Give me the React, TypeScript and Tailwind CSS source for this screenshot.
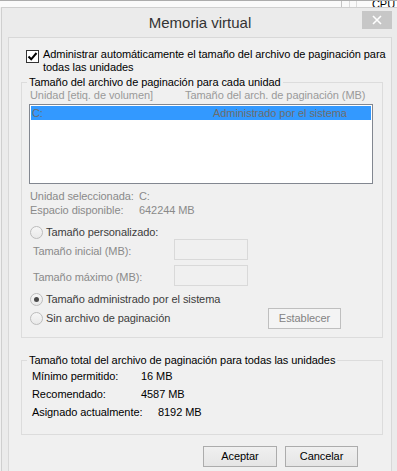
import React from 'react';

const font = { fontFamily: '"Liberation Sans", Arial, sans-serif' };

function Radio({ checked = false }: { checked?: boolean }) {
  return (
    <span className="flex h-[13px] w-[13px] shrink-0 items-center justify-center rounded-full border border-[#bcbcbc] bg-gradient-to-b from-[#f6f6f6] to-[#e9e9e9]">
      {checked && <span className="h-[5px] w-[5px] rounded-full bg-[#4a4a4a]" />}
    </span>
  );
}

function Checkbox() {
  return (
    <span className="flex h-[13px] w-[13px] shrink-0 items-center justify-center border border-[#333] bg-white">
      <svg width="11" height="11" viewBox="0 0 11 11">
        <path d="M1.5 5.5 L4.2 8.3 L9.5 2" fill="none" stroke="#000" strokeWidth="2" />
      </svg>
    </span>
  );
}

function WinButton({ label, disabled = false, width }: { label: string; disabled?: boolean; width: string }) {
  return (
    <div
      className={
        disabled
          ? `flex h-[21px] ${width} items-center justify-center border border-[#bfbfbf] bg-[#f4f4f4] text-[#838383]`
          : `flex h-[21px] ${width} items-center justify-center border border-[#acacac] bg-gradient-to-b from-[#f0f0f0] to-[#e5e5e5] text-black`
      }
    >
      {label}
    </div>
  );
}

export default function App() {
  return (
    <div className="h-[471px] w-[397px] overflow-hidden whitespace-nowrap bg-[#f0f0f0] text-[11px] leading-[13px] tracking-[-0.07px]" style={font}>
      {/* background window peeking out at the top */}
      <div className="flex h-[7px] overflow-hidden border-t border-[#acacac] bg-[#fafafa]">
        <div className="w-[341px] shrink-0 overflow-hidden">
          <div className="-mt-[12px] pl-[88px] text-black">Prevención de ejecución de datos</div>
        </div>
        <div className="w-[8px] shrink-0 border-l border-[#c4c4c4]" />
        <div className="w-[7px] shrink-0 border-l border-[#dcdcdc]" />
        <div className="w-[14px] shrink-0 border-l border-[#dcdcdc]" />
        <div className="-mt-[3px] flex-1 bg-white pl-[2px] text-black">CPU</div>
      </div>

      {/* dialog */}
      <div className="ml-[1px] w-[398px] border border-[#cfcfcf] bg-[#ebebeb] px-[6px]">
        <div className="flex h-[29px] items-center">
          <div className="flex-1 pl-[30px] text-center text-[15px] leading-[18px] tracking-normal text-[#333]">Memoria virtual</div>
          <div className="mb-[5px] flex h-[18px] w-[30px] items-center justify-center bg-[#c7c7c7]">
            <svg width="10" height="10" viewBox="0 0 10 10">
              <path d="M1 1 L9 9 M9 1 L1 9" stroke="#fff" strokeWidth="1.6" />
            </svg>
          </div>
        </div>

        <div className="h-[440px] border border-[#d8d8d8] bg-[#f0f0f0]">
          {/* auto manage checkbox */}
          <div className="mt-[10px] flex gap-[4px] pl-[17px] text-black">
            <span className="pt-[2px]">
              <Checkbox />
            </span>
            <span>
              Administrar automáticamente el tamaño del archivo de paginación para
              <br />
              todas las unidades
            </span>
          </div>

          {/* per-drive group */}
          <fieldset className="ml-[12px] mt-[2px] w-[362px] border border-[#dcdcdc] pb-[8px]">
            <legend className="ml-[5px] px-[2px] text-black">Tamaño del archivo de paginación para cada unidad</legend>
            <div className="flex pl-[8px] text-[#9a9a9a]">
              <span className="w-[155px]">Unidad [etiq. de volumen]</span>
              <span>Tamaño del arch. de paginación (MB)</span>
            </div>
            <div className="ml-[7px] mt-[2px] h-[80px] w-[344px] border border-[#828790] bg-white p-[1px]">
              <div className="flex h-[14px] items-center bg-[#3399ff] pl-[1px] text-[#6d6d6d]">
                <span className="w-[181px]">C:</span>
                <span>Administrado por el sistema</span>
              </div>
            </div>

            <div className="mt-[5px] pl-[8px] text-[#8a8a8a]">
              <div className="flex h-[14px] items-center">
                <span className="w-[109px]">Unidad seleccionada:</span>
                <span>C:</span>
              </div>
              <div className="flex h-[14px] items-center">
                <span className="w-[109px]">Espacio disponible:</span>
                <span>642244 MB</span>
              </div>
            </div>

            <div className="mt-[9px] flex items-center gap-[3px] pl-[8px] text-[#3c3c3c]">
              <Radio />
              <span>Tamaño personalizado:</span>
            </div>

            <div className="flex items-center pl-[11px] text-[#8a8a8a]">
              <span className="w-[141px] pt-[3px]">Tamaño inicial (MB):</span>
              <span className="h-[21px] w-[74px] border border-[#d9d9d9] bg-[#f0f0f0]" />
            </div>
            <div className="mt-[5px] flex items-center pl-[11px] text-[#8a8a8a]">
              <span className="w-[141px] pt-[3px]">Tamaño máximo (MB):</span>
              <span className="h-[21px] w-[74px] border border-[#d9d9d9] bg-[#f0f0f0]" />
            </div>

            <div className="mt-[7px] flex items-center gap-[3px] pl-[8px] text-[#3c3c3c]">
              <Radio checked />
              <span>Tamaño administrado por el sistema</span>
            </div>
            <div className="mt-[2px] flex items-center justify-between pl-[8px] pr-[41px] text-[#3c3c3c]">
              <div className="flex items-center gap-[3px]">
                <Radio />
                <span>Sin archivo de paginación</span>
              </div>
              <WinButton label="Establecer" disabled width="w-[73px]" />
            </div>
          </fieldset>

          {/* totals group */}
          <fieldset className="ml-[12px] mt-[16px] w-[362px] border border-[#dcdcdc] pb-[13px] text-black">
            <legend className="ml-[5px] px-[2px]">Tamaño total del archivo de paginación para todas las unidades</legend>
            <div className="pl-[10px]">
              <div className="flex h-[18px] items-center">
                <span className="w-[109px]">Mínimo permitido:</span>
                <span>16 MB</span>
              </div>
              <div className="flex h-[18px] items-center">
                <span className="w-[109px]">Recomendado:</span>
                <span>4587 MB</span>
              </div>
              <div className="flex h-[18px] items-center">
                <span className="w-[126px]">Asignado actualmente:</span>
                <span>8192 MB</span>
              </div>
            </div>
          </fieldset>

          <div className="mr-[33px] mt-[11px] flex justify-end gap-[8px]">
            <WinButton label="Aceptar" width="w-[74px]" />
            <WinButton label="Cancelar" width="w-[73px]" />
          </div>
        </div>
      </div>
    </div>
  );
}
